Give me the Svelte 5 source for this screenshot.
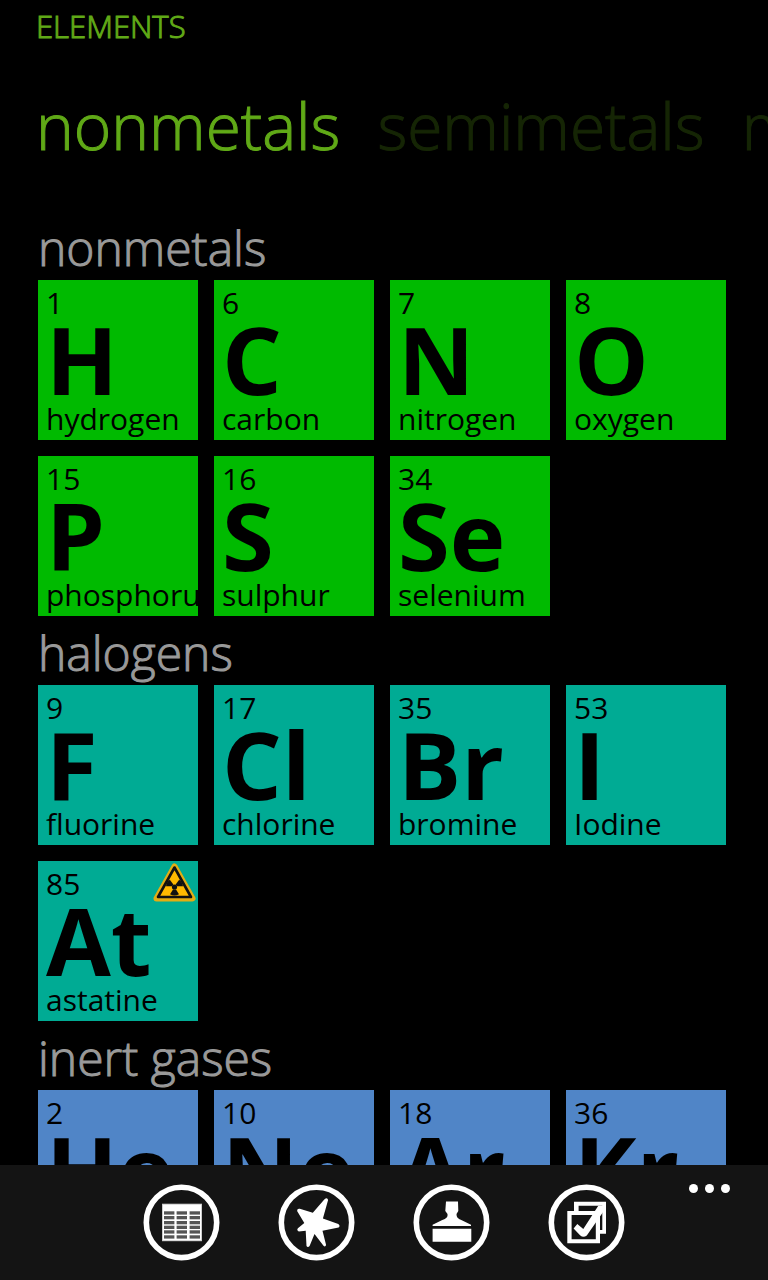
<script>
  const tabs = ['nonmetals', 'semimetals', 'metals'];
  let active = $state('nonmetals');

  const groups = [
    {
      name: 'nonmetals',
      tone: 'green',
      items: [
        [1, 'H', 'hydrogen'],
        [6, 'C', 'carbon'],
        [7, 'N', 'nitrogen'],
        [8, 'O', 'oxygen'],
        [15, 'P', 'phosphorus'],
        [16, 'S', 'sulphur'],
        [34, 'Se', 'selenium']
      ]
    },
    {
      name: 'halogens',
      tone: 'teal',
      items: [
        [9, 'F', 'fluorine'],
        [17, 'Cl', 'chlorine'],
        [35, 'Br', 'bromine'],
        [53, 'I', 'Iodine'],
        [85, 'At', 'astatine', true]
      ]
    },
    {
      name: 'inert gases',
      tone: 'blue',
      items: [
        [2, 'He', 'helium'],
        [10, 'Ne', 'neon'],
        [18, 'Ar', 'argon'],
        [36, 'Kr', 'krypton']
      ]
    }
  ];

  const tableRows = [27.3, 32, 37, 41.7, 46.3, 51.3];
  const tableCols = [20.7, 33.3, 46.3];
</script>

<div class="page">
  <header>
    <h1>ELEMENTS</h1>
    <nav>
      {#each tabs as tab}
        <button class="tab" class:active={tab === active} onclick={() => (active = tab)}>{tab}</button>
      {/each}
    </nav>
  </header>

  <main>
    {#each groups as group}
      <section>
        <h2>{group.name}</h2>
        <div class="tiles">
          {#each group.items as [number, symbol, name, radioactive]}
            <button class="tile {group.tone}">
              <span class="number">{number}</span>
              <span class="symbol">{symbol}</span>
              <span class="name">{name}</span>
              {#if radioactive}
                <svg class="warning" viewBox="0 0 43 39" aria-hidden="true">
                  <path d="M21.5 3.5 L39.5 35.5 H3.5 Z" fill="#ffb900" stroke="#e3ad13" stroke-width="6" stroke-linejoin="round" />
                  <path d="M21.5 4.5 L38 34 H5 Z" fill="#ffb900" stroke="#111" stroke-width="2.6" stroke-linejoin="round" />
                  <g fill="#111">
                    <circle cx="21.5" cy="24" r="2.6" />
                    <path d="M19 23.2 H13 A9 9 0 0 1 16.8 16.8 L20.4 21.6 Z" />
                    <path d="M24 23.2 H30 A9 9 0 0 0 26.2 16.8 L22.6 21.6 Z" />
                    <path d="M20 26.4 H23 L26 31.2 Q21.5 33.6 17 31.2 Z" />
                  </g>
                </svg>
              {/if}
            </button>
          {/each}
        </div>
      </section>
    {/each}
  </main>

  <footer>
    <div class="actions">
      <button class="round" aria-label="table">
        <svg viewBox="0.7 0 76 76">
          <circle class="ring" cx="38.2" cy="38.4" r="35.2" />
          <rect x="18.7" y="19.7" width="40" height="37.5" fill="#ccc" />
          <rect x="19.7" y="20.7" width="38" height="35.5" fill="#fff" />
          {#each tableRows as y}
            {#each tableCols as x}
              <rect {x} {y} width="10.4" height="3.3" fill="#555" />
            {/each}
          {/each}
        </svg>
      </button>
      <button class="round" aria-label="reactions">
        <svg viewBox="0.7 0 76 76">
          <circle class="ring" cx="38.2" cy="38.4" r="35.2" />
          <path class="solid" d="M46 15.5 Q49 13 49.8 16 L44.6 34.6 L60 40 Q62.3 41.8 60.3 43.6 L44.2 46.8 L47.8 61 Q47 63.4 45.2 61.8 L36.2 50 L31.3 62 Q29.5 63.8 28.2 62 L27.4 46.8 L20.5 47.4 Q18 46.3 19.6 44.3 L26 39 L18.8 27 Q18.8 24.2 21.5 24.8 L34.5 28.8 Z" />
        </svg>
      </button>
      <button class="round" aria-label="stamp">
        <svg viewBox="0.7 0 76 76">
          <circle class="ring" cx="38.2" cy="38.4" r="35.2" />
          <path class="solid" d="M32.7 17.5 H44.7 L45 27 Q42.8 29.5 43.4 32 Q44 34.5 48 36 L57.7 40.8 V42 H19.3 V40.8 L29 36 Q33.5 34.5 34.2 32 Q34.6 29.5 32 27 Z M19.3 44.7 H58 V57.7 H19.3 Z" />
        </svg>
      </button>
      <button class="round" aria-label="select">
        <svg viewBox="0.7 0 76 76">
          <circle class="ring" cx="38.2" cy="38.4" r="35.2" />
          <path class="solid" fill-rule="evenodd" d="M25.7 17.7 H57.7 V49.7 H51.7 V46 H54 V21.7 H30.3 V27 H25.7 Z" />
          <path class="solid" fill-rule="evenodd" d="M19 27 H51.7 V59.3 H19 Z M23.3 31 V55.3 H47.5 V31 Z" />
          <path class="solid" d="M50 21.7 H55.5 V27 L38.5 51.5 Q35 54 32 51.5 L25.3 44.5 L29 40 L35 45 Z" />
        </svg>
      </button>
    </div>
    <button class="more" aria-label="more"><i></i><i></i><i></i></button>
  </footer>
</div>

<style>
  :global(body) {
    background: #000;
  }

  .page {
    display: flex;
    flex-direction: column;
    height: 100vh;
    overflow: hidden;
    background: #000;
    font-family: 'Open Sans', 'Noto Sans', sans-serif;
  }

  button {
    margin: 0;
    padding: 0;
    border: 0;
    background: none;
    color: inherit;
    font: inherit;
    text-align: left;
    cursor: pointer;
  }

  header {
    flex: none;
    padding-left: 36px;
    color: #60a917;
  }

  h1,
  h2,
  .tab {
    font-weight: 300;
    -webkit-text-stroke: 1px currentColor;
  }

  h1 {
    margin: 0;
    font-size: 31px;
    line-height: 52px;
  }

  nav {
    display: flex;
    gap: 37px;
    height: 159px;
    overflow: hidden;
  }

  .tab {
    flex: none;
    height: 148px;
    font-size: 64px;
    line-height: 148px;
    opacity: 0.22;
  }

  .tab.active {
    opacity: 1;
  }

  main {
    flex: 1;
    min-height: 0;
    padding: 0 38px;
    overflow: hidden;
  }

  h2 {
    margin: 0;
    padding-top: 5px;
    color: #999;
    font-size: 48px;
    line-height: 64px;
  }

  .tiles {
    display: grid;
    grid-template-columns: repeat(auto-fill, 160px);
    gap: 16px;
  }

  .tile {
    position: relative;
    display: flex;
    flex-direction: column;
    height: 160px;
    padding-left: 8px;
    overflow: hidden;
    color: #000;
    white-space: nowrap;
  }

  .green {
    background: #00ba00;
  }

  .teal {
    background: #00ab94;
  }

  .blue {
    background: #5085c7;
  }

  .number,
  .name {
    font-size: 30px;
    line-height: 46px;
  }

  .symbol {
    font-size: 94px;
    font-weight: 700;
    line-height: 66px;
  }

  .name {
    line-height: 54px;
  }

  .warning {
    position: absolute;
    top: 2px;
    right: 2px;
    width: 43px;
    height: 39px;
  }

  footer {
    flex: none;
    display: grid;
    grid-template-columns: 1fr auto 1fr;
    padding: 19px 38px 20px;
    background: #141414;
  }

  .actions {
    grid-column: 2;
    display: flex;
    gap: 59px;
  }

  .round,
  .round svg {
    display: block;
    width: 76px;
    height: 76px;
  }

  .round svg {
    overflow: visible;
  }

  .ring {
    fill: none;
    stroke: #fff;
    stroke-width: 5.6;
  }

  .solid {
    fill: #fff;
  }

  .more {
    display: flex;
    gap: 7px;
    align-self: start;
    justify-self: end;
  }

  .more i {
    width: 9px;
    height: 9px;
    border-radius: 50%;
    background: #fff;
  }
</style>
